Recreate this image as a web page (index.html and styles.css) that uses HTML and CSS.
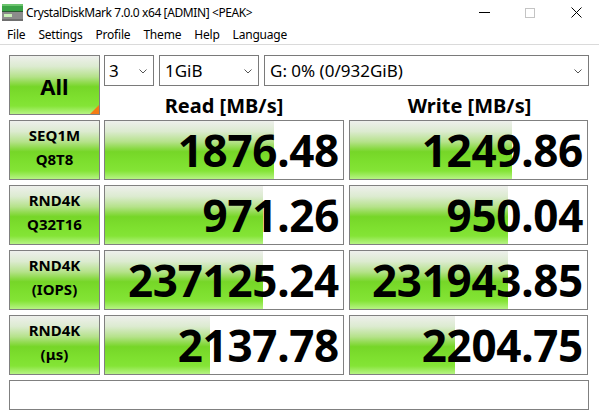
FILE: index.html
```html
<!DOCTYPE html>
<html>
<head>
    <title>CrystalDiskMark 7.0.0 x64 [ADMIN] &lt;PEAK&gt;</title>
    <meta charset="utf-8">
    <link rel="stylesheet" href="styles.css">
</head>
<body>
    <div class="titlebar">
        <svg class="app-icon" width="21" height="17" viewBox="0 0 21 17">
            <!-- disk icon: green lid, grey body, led strip -->
            <rect x="0" y="0" width="21" height="7" fill="#3aa246"/>
            <rect x="0" y="0" width="21" height="2" fill="#6cc46e"/>
            <rect x="0" y="7" width="21" height="1" fill="#2d5a33"/>
            <rect x="0" y="8" width="21" height="9" fill="#8c8c8c"/>
            <rect x="0" y="15" width="21" height="2" fill="#6e6e6e"/>
            <rect x="2" y="10" width="8" height="3" fill="#c9f0b8"/>
        </svg>
        <span class="title">CrystalDiskMark 7.0.0 x64 [ADMIN] &lt;PEAK&gt;</span>
        <div class="win-buttons">
            <span class="win-btn">
                <svg width="11" height="11" viewBox="0 0 11 11"><line x1="0" y1="5.5" x2="11" y2="5.5" stroke="#000" stroke-width="1"/></svg>
            </span>
            <span class="win-btn">
                <svg width="10" height="10" viewBox="0 0 10 10"><rect x="0.5" y="0.5" width="9" height="9" fill="none" stroke="#c4c4c4" stroke-width="1"/></svg>
            </span>
            <span class="win-btn">
                <svg width="11" height="11" viewBox="0 0 11 11"><path d="M0.5 0.5 L10.5 10.5 M10.5 0.5 L0.5 10.5" stroke="#000" stroke-width="1" fill="none"/></svg>
            </span>
        </div>
    </div>

    <div class="menubar">
        <span class="menu-item">File</span>
        <span class="menu-item">Settings</span>
        <span class="menu-item">Profile</span>
        <span class="menu-item">Theme</span>
        <span class="menu-item">Help</span>
        <span class="menu-item">Language</span>
    </div>

    <div class="main">
        <div class="top">
            <div class="all-btn">All<span class="corner"></span></div>
            <div class="top-right">
                <div class="combos">
                    <div class="combo combo-count">3<svg class="chev" width="8" height="5" viewBox="0 0 8 5"><polyline points="0.5,0.5 4,4 7.5,0.5" fill="none" stroke="#555" stroke-width="1"/></svg></div>
                    <div class="combo combo-size">1GiB<svg class="chev" width="8" height="5" viewBox="0 0 8 5"><polyline points="0.5,0.5 4,4 7.5,0.5" fill="none" stroke="#555" stroke-width="1"/></svg></div>
                    <div class="combo combo-drive">G: 0% (0/932GiB)<svg class="chev" width="8" height="5" viewBox="0 0 8 5"><polyline points="0.5,0.5 4,4 7.5,0.5" fill="none" stroke="#555" stroke-width="1"/></svg></div>
                </div>
                <div class="heads">
                    <div class="col-head">Read [MB/s]</div>
                    <div class="col-head write">Write [MB/s]</div>
                </div>
            </div>
        </div>

        <div class="row">
            <div class="label">SEQ1M<br>Q8T8</div>
            <div class="value" style="--fill: 169px">1876.48</div>
            <div class="value write" style="--fill: 162px">1249.86</div>
        </div>
        <div class="row">
            <div class="label">RND4K<br>Q32T16</div>
            <div class="value" style="--fill: 158px">971.26</div>
            <div class="value write" style="--fill: 158px">950.04</div>
        </div>
        <div class="row">
            <div class="label">RND4K<br>(IOPS)</div>
            <div class="value" style="--fill: 158px">237125.24</div>
            <div class="value write" style="--fill: 158px">231943.85</div>
        </div>
        <div class="row">
            <div class="label">RND4K<br>(μs)</div>
            <div class="value" style="--fill: 105px">2137.78</div>
            <div class="value write" style="--fill: 105px">2204.75</div>
        </div>

        <div class="comment"></div>
    </div>
</body>
</html>
```

FILE: styles.css
```css
body {
    margin: 0;
    padding: 0;
    background-color: #fff;
    font-family: "Noto Sans", "Open Sans", sans-serif;
    color: #000;
    width: 599px;
    height: 419px;
    overflow: hidden;
}

/* window chrome */
.titlebar {
    height: 25px;
    display: flex;
    align-items: center;
    background-color: #fff;
}

.app-icon {
    margin-left: 2px;
    margin-right: 3px;
    margin-top: -1px;
}

.title {
    font-size: 12px;
    letter-spacing: -0.4px;
    margin-top: -1px;
}

.win-buttons {
    margin-left: auto;
    display: flex;
    height: 25px;
}

.win-btn {
    width: 46px;
    display: flex;
    align-items: center;
    justify-content: center;
}

.menubar {
    height: 19px;
    display: flex;
    align-items: center;
    border-bottom: 1px solid #dadada;
    font-size: 12px;
    letter-spacing: -0.2px;
}

.menu-item {
    padding: 0 6px 0 7px;
}

/* main panel */
.main {
    padding: 10px 10px 0 9px;
}

.top {
    display: grid;
    grid-template-columns: 91px 1fr;
    column-gap: 4px;
    height: 60px;
}

.all-btn {
    position: relative;
    box-sizing: border-box;
    height: 60px;
    border: 1px solid #808080;
    background: linear-gradient(180deg, #eef0ec 0%, #dcebd0 18%, #b5e28a 36%, #8cda48 47%, #76d628 53%, #7ddf2e 70%, #84e436 86%, #b6f384 100%);
    font-weight: bold;
    font-size: 22px;
    line-height: 22px;
    display: flex;
    align-items: center;
    justify-content: center;
    padding-top: 1px;
}

/* little orange marker in the corner */
.all-btn .corner {
    position: absolute;
    right: 0;
    bottom: 0;
    width: 0;
    height: 0;
    border-left: 9px solid transparent;
    border-bottom: 9px solid #f57c14;
}

.combos {
    display: flex;
    gap: 5px;
    height: 31px;
}

.combo {
    position: relative;
    box-sizing: border-box;
    height: 31px;
    border: 1px solid #7a7a7a;
    background-color: #fff;
    font-size: 17px;
    line-height: 29px;
    padding-left: 4px;
}

.combo-count { width: 50px; }
.combo-size { width: 100px; padding-left: 5px; }
.combo-drive { width: 325px; padding-left: 5px; }

.chev {
    position: absolute;
    right: 6px;
    top: 13px;
}

.heads {
    display: grid;
    grid-template-columns: 240px 241px;
    column-gap: 5px;
}

.col-head {
    text-align: center;
    font-weight: bold;
    font-size: 20px;
    line-height: 20px;
    padding-top: 10px;
}

/* result rows */
.row {
    display: grid;
    grid-template-columns: 91px 240px 240px;
    column-gap: 4px;
    height: 60px;
    margin-top: 5px;
}

.label {
    box-sizing: border-box;
    border: 1px solid #808080;
    background: linear-gradient(180deg, #eef0ec 0%, #dcebd0 18%, #b5e28a 36%, #8cda48 47%, #76d628 53%, #7ddf2e 70%, #84e436 86%, #b6f384 100%);
    text-align: center;
    font-weight: bold;
    font-size: 15px;
    line-height: 24px;
    padding-top: 2px;
}

.value {
    box-sizing: border-box;
    border: 1px solid #808080;
    background-color: #fff;
    background-image: linear-gradient(180deg, #eef0ec 0%, #dcebd0 18%, #b5e28a 36%, #8cda48 47%, #76d628 53%, #7ddf2e 70%, #84e436 86%, #b6f384 100%);
    background-repeat: no-repeat;
    background-size: var(--fill) 100%;
    text-align: right;
    font-weight: bold;
    font-size: 44px;
    line-height: 58px;
    padding-right: 4px;
    letter-spacing: -0.3px;
}

.value.write {
    margin-left: 1px;
}

.comment {
    box-sizing: border-box;
    height: 30px;
    margin-top: 5px;
    border: 1px solid #808080;
    background-color: #fff;
}
```
